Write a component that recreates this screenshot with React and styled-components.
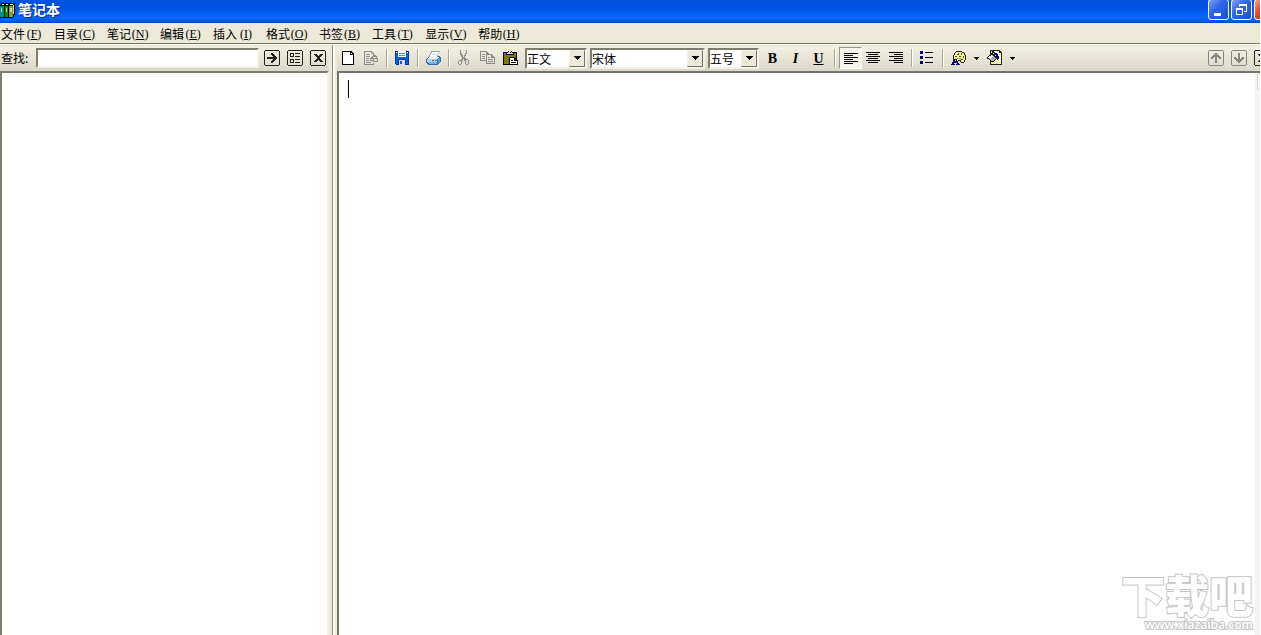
import styled, { createGlobalStyle, css } from "styled-components";

const menus = [
  ["文件", "F"],
  ["目录", "C"],
  ["笔记", "N"],
  ["编辑", "E"],
  ["插入", "I"],
  ["格式", "O"],
  ["书签", "B"],
  ["工具", "T"],
  ["显示", "V"],
  ["帮助", "H"],
];

export default function App() {
  return (
    <Window>
      <GlobalStyle />
      <TitleBar>
        <BooksIcon />
        <Title>笔记本</Title>
        <WindowButton aria-label="最小化">
          <Glyph>
            <path d="M3 11h7v3H3z" fill="#fff" />
          </Glyph>
        </WindowButton>
        <WindowButton aria-label="还原">
          <Glyph>
            <path d="M5 2h8v8h-3V9h2V4H6v1H5zM2 6h7v7H2zM3 8v4h5V8z" fill="#fff" fillRule="evenodd" />
          </Glyph>
        </WindowButton>
        <WindowButton $close aria-label="关闭">
          <Glyph>
            <path d="M4 4l9 9M13 4l-9 9" stroke="#fff" strokeWidth="2" />
          </Glyph>
        </WindowButton>
      </TitleBar>

      <MenuBar>
        {menus.map(([label, key]) => (
          <MenuItem key={key}>
            {label}
            <Shortcut>
              (<u>{key}</u>)
            </Shortcut>
          </MenuItem>
        ))}
      </MenuBar>

      <Panels>
        <Sidebar>
          <SearchBar>
            <SearchLabel htmlFor="search">查找:</SearchLabel>
            <SearchInput id="search" type="text" />
            <BoxButtons>
              <BoxButton aria-label="查找">
                <BoxGlyph>
                  <path d="M3 7h6V6H8V5H7V3h2v1h1v1h1v1h1v1h1v2h-1v1h-1v1h-1v1H9v1H7v-2h1v-1h1V9H3z" />
                </BoxGlyph>
              </BoxButton>
              <BoxButton aria-label="列表">
                <BoxGlyph>
                  <path d="M3 3h4v4H3zM4 4v2h2V4zM3 9h4v4H3zM4 10v2h2v-2zM8 3h5v1H8zM8 6h5v1H8zM8 9h5v1H8zM8 12h5v1H8z" />
                </BoxGlyph>
              </BoxButton>
              <BoxButton aria-label="关闭查找">
                <CrossGlyph />
              </BoxButton>
            </BoxButtons>
          </SearchBar>
          <Tree />
        </Sidebar>

        <Main>
          <Toolbar>
            <ToolButton aria-label="新建">
              <Glyph>
                <path d="M1 1h9l3 3v11H1z" fill="#000" />
                <path d="M2 2h7v3h3v9H2z" fill="#fff" />
                <path d="M10 3h1v1h-1z" fill="#fff" />
              </Glyph>
            </ToolButton>
            <ToolButton aria-label="导出">
              <Glyph>
                <path
                  d="M0 1h8v1h1v1h1v2H9V4H8V3H7V2H1v12h8v-1h1v2H0zM2 4h4v1H2zM2 6h4v1H2zM2 8h3v1H2zM2 10h3v1H2zM2 12h5v1H2z"
                  fill="#8c8c8c"
                />
                <path
                  d="M6 8h1V7h1V6h1V5h3v1h1v2h1v4H9v-1H6zM9 7v1h3V7zM7 9v1h2V9zM10 9v2h3V9z"
                  fill="#8c8c8c"
                  fillRule="evenodd"
                />
              </Glyph>
            </ToolButton>
            <Separator />
            <ToolButton aria-label="保存">
              <Glyph>
                <path d="M0 1h14v14H1v-1H0z" fill="#003a9c" />
                <path d="M1 2h12v12H1z" fill="#0860d0" />
                <path d="M3 1h8v6H3z" fill="#fff" />
                <path d="M4 3h6v1H4zM4 5h6v1H4z" fill="#5a88c8" />
                <path d="M3 9h8v6H3z" fill="#003a9c" />
                <path d="M4 10h6v5H4z" fill="#d8dcf0" />
                <path d="M5 11h2v3H5z" fill="#0860d0" />
                <path d="M1 2h1v1H1zM12 2h1v1h-1z" fill="#fff" />
              </Glyph>
            </ToolButton>
            <Separator />
            <ToolButton aria-label="打印">
              <Glyph>
                <path d="M0 9h1V8h1V7h2V6h10v1h1v5h-1v1h-1v1h-1v1H2v-1H1v-1H0z" fill="#2e6fb8" />
                <path d="M1 9h10v4H2v-1H1z" fill="#a9d4f7" />
                <path d="M3 7h10v1h-1v1H2V8h1z" fill="#e4f4ff" />
                <path d="M12 9h1V8h1v4h-1v1h-1z" fill="#5ea2e2" />
                <path d="M3 12h8v2H3z" fill="#6cb2ee" />
                <path d="M5 1h9v1h-1v2h-1v3H3V5h1V3h1z" fill="#8aa4c4" />
                <path d="M6 2h7v1h-1v2h-1v2H4V5h1V3h1z" fill="#fff" />
                <path d="M6 4h5v1H6z" fill="#c5cfdc" />
                <path d="M6 10h2v1H6z" fill="#e02020" />
                <path d="M9 10h2v1H9z" fill="#18b030" />
              </Glyph>
            </ToolButton>
            <Separator />
            <ToolButton aria-label="剪切">
              <Glyph>
                <path
                  d="M3 0h1v3h1v2h1v2h1V5h1V3h1V0h1v4H9v2H8v2h1v1h2v1h1v4h-1v1H9v-1H8v-3H7V9H6v2H5v3H4v1H2v-1H1v-3h1v-1h2V9h1V7H4V5H3zM2 11v3h2v-3zM9 10v4h2v-4z"
                  fill="#8c8c8c"
                  fillRule="evenodd"
                />
              </Glyph>
            </ToolButton>
            <ToolButton aria-label="复制">
              <Glyph>
                <path
                  d="M0 1h7v1h1v1h1v1H6V2H1v8h5v1H0zM2 4h3v1H2zM2 6h3v1H2zM2 8h3v1H2zM6 4h6v1h1v1h1v1h1v7H6zM7 5v8h7V8h-3V5zM8 7h2v1H8zM8 9h5v1H8zM8 11h5v1H8z"
                  fill="#8c8c8c"
                  fillRule="evenodd"
                />
              </Glyph>
            </ToolButton>
            <ToolButton aria-label="粘贴">
              <Glyph>
                <path d="M0 2h14v13H0z" fill="#000" />
                <path d="M1 3h12v11H1z" fill="#7b7b00" />
                <path d="M3 3h8v2H3zM5 1h4v2H5z" fill="#000" />
                <path d="M4 3h1V2h1V1h2v1h1v1h1v1H4z" fill="#f5f000" />
                <path d="M7 2h1v1H7z" fill="#000" />
                <path d="M6 7h6v1h1v1h1v1h1v5H6z" fill="#000" />
                <path d="M7 8h4v3h3v3H7z" fill="#fff" />
                <path d="M8 10h2v1H8zM8 12h5v1H8z" fill="#000" />
              </Glyph>
            </ToolButton>
            <Combo $width={62} label="样式" value="正文" />
            <Combo $width={115} label="字体" value="宋体" />
            <Combo $width={51} label="字号" value="五号" />
            <FontButtons>
              <ToolButton aria-label="加粗">
                <Letter as="b">B</Letter>
              </ToolButton>
              <ToolButton aria-label="斜体">
                <Letter as="i">I</Letter>
              </ToolButton>
              <ToolButton aria-label="下划线">
                <Letter as="u">U</Letter>
              </ToolButton>
            </FontButtons>
            <Separator />
            <ToolButton $pressed aria-label="左对齐" aria-pressed="true">
              <Glyph>
                <path d="M1 3h14v1H1zM1 5h9v1H1zM1 7h14v1H1zM1 9h9v1H1zM1 11h14v1H1zM1 13h9v1H1z" />
              </Glyph>
            </ToolButton>
            <ToolButton aria-label="居中">
              <Glyph>
                <path d="M0 2h14v1H0zM2 4h10v1H2zM0 6h14v1H0zM2 8h10v1H2zM0 10h14v1H0zM2 12h10v1H2z" />
              </Glyph>
            </ToolButton>
            <ToolButton aria-label="右对齐">
              <Glyph>
                <path d="M0 2h14v1H0zM5 4h9v1H5zM0 6h14v1H0zM5 8h9v1H5zM0 10h14v1H0zM5 12h9v1H5z" />
              </Glyph>
            </ToolButton>
            <Separator />
            <ToolButton aria-label="项目符号">
              <Glyph>
                <path d="M0 1h3v3H0zM0 6h3v3H0zM0 11h3v3H0z" fill="#00007b" />
                <path d="M5 2h8v1H5zM5 7h8v1H5zM5 12h8v1H5z" />
              </Glyph>
            </ToolButton>
            <Separator />
            <ToolButton aria-label="文字颜色">
              <Glyph>
                <path d="M5 1h6v1h2v1h1v2h1v5h-1v2h-1v1h-3v-1H9v-1H7v1H3v-1H2V5h1V3h1V2h1z" fill="#222" />
                <path d="M5 2h6v1h2v2h1v5h-1v2h-3v-2H7v1H3V5h1V3h1z" fill="#f5ef8e" />
                <path
                  d="M6 3h2v2H6zM10 3h1v2h-1zM4 6h2v1H4zM12 6h1v2h-1zM8 6h2v1H8zM10 9h2v1h-2z"
                  fill="#55552a"
                />
                <path d="M6 3h1v1H6zM5 5h1v1H5zM11 5h1v1h-1z" fill="#fff" />
                <path d="M6 8h1v1H6z" fill="#c02020" />
                <path d="M8 8h2v1H8z" fill="#20a0a0" />
                <path
                  d="M3 9h3v2h1v2h1v1h1v1H5v-1h1v-1H3v1h1v1H0v-1h1v-2h1v-2h1zM4 10v2h1v-2z"
                  fill="#00007b"
                  fillRule="evenodd"
                />
              </Glyph>
            </ToolButton>
            <DropArrow aria-label="选择文字颜色">
              <ArrowGlyph />
            </DropArrow>
            <ToolButton aria-label="背景颜色">
              <Glyph>
                <path d="M3 0h10v1h1v1h1v13H3z" fill="#222" />
                <path d="M4 1h8v2h2v11H4z" fill="#fff" />
                <path
                  d="M4 1h2v1H4zM10 1h1v1h-1zM12 4h2v1h-2zM12 7h1v1h-1zM13 9h1v1h-1zM11 10h1v1h-1zM12 12h2v1h-2zM9 11h1v1H9zM9 13h2v1H9zM7 12h1v1H7zM5 12h1v1H5zM4 13h1v1H4z"
                  fill="#f3e500"
                />
                <path d="M4 3h2v1h1v1h1v1h1v1h1v2H9v1H8v1H7v1H4v-1H3v-1H2V9H0V7h1V6h1V5h1V4h1z" fill="#222" />
                <path d="M4 5h2v1h1v1h1v1h1v1H8v1H7v1H4v-1H3V9H2V8H1V7h1V6h2z" fill="#a8a8a8" />
                <path d="M4 5h1v1h1v1H5v1H4v1H3V8H1V7h1V6h2z" fill="#f4f4f4" />
                <path d="M5 1h2v1h1v3H7V3H5z" fill="#222" />
                <path d="M8 3h2v1h1v2h1v3h-1v1h-1V7H9V5H8z" fill="#00007b" />
              </Glyph>
            </ToolButton>
            <DropArrow aria-label="选择背景颜色">
              <ArrowGlyph />
            </DropArrow>
            <NavButtons>
              <BoxButton disabled aria-label="上一条">
                <BoxGlyph>
                  <path d="M7 3h2v1h1v1h1v1h1v1h1v2h-2V8h-1V7H9v6H7V7H6v1H5v1H3V7h1V6h1V5h1V4h1z" />
                </BoxGlyph>
              </BoxButton>
              <BoxButton disabled aria-label="下一条">
                <BoxGlyph>
                  <path d="M7 13h2v-1h1v-1h1v-1h1V9h1V7h-2v1h-1v1H9V3H7v6H6V8H5V7H3v2h1v1h1v1h1v1h1z" />
                </BoxGlyph>
              </BoxButton>
              <BoxButton aria-label="关闭笔记">
                <CrossGlyph />
              </BoxButton>
            </NavButtons>
          </Toolbar>
          <Editor>
            <NoteText aria-label="笔记内容" spellCheck={false} />
            <ScrollTrack>
              <ScrollButton aria-label="向上滚动" disabled />
            </ScrollTrack>
            <Caret />
            <Watermark>
              <Brand>下载吧</Brand>
              <Site>www.xiazaiba.com</Site>
            </Watermark>
          </Editor>
        </Main>
      </Panels>
    </Window>
  );
}

function Combo({ label, value, $width }) {
  return (
    <ComboFrame $width={$width}>
      <ComboSelect aria-label={label} defaultValue={value}>
        <option>{value}</option>
      </ComboSelect>
      <ComboArrow>
        <ArrowGlyph />
      </ComboArrow>
    </ComboFrame>
  );
}

function Glyph({ children }) {
  return (
    <svg width="16" height="16" viewBox="0 0 16 16" shapeRendering="crispEdges" aria-hidden="true">
      {children}
    </svg>
  );
}

function BoxGlyph({ children }) {
  return (
    <svg
      width="16"
      height="16"
      viewBox="0 0 16 16"
      shapeRendering="crispEdges"
      fill="currentColor"
      fillRule="evenodd"
      aria-hidden="true"
    >
      <path d="M1 0h14v1h1v14h-1v1H1v-1H0V1h1zM1 1v14h14V1z" />
      {children}
    </svg>
  );
}

function CrossGlyph() {
  return (
    <BoxGlyph>
      <path d="M4 4h3v1h1v1h1V5h1V4h3v1h-1v1h-1v1h-1v2h1v1h1v1h1v1h-3v-1H9v-1H8v1H7v1H4v-1h1v-1h1V9h1V7H6V6H5V5H4z" />
    </BoxGlyph>
  );
}

function ArrowGlyph() {
  return (
    <svg width="7" height="4" viewBox="0 0 7 4" shapeRendering="crispEdges" aria-hidden="true">
      <path d="M0 0h7v1H6v1H5v1H4v1H3V3H2V2H1V1H0z" />
    </svg>
  );
}

function BooksIcon() {
  return (
    <svg width="16" height="16" viewBox="0 0 16 16" shapeRendering="crispEdges" aria-hidden="true">
      <path d="M1 1h14v12h-1v2h-1v1H0V3h1z" fill="#000" />
      <path d="M2 2h2v1H2zM6 2h2v1H6zM10 2h3v1h-3z" fill="#fff" />
      <path d="M0 4h4v11H0z" fill="#009090" />
      <path d="M5 4h3v11H5z" fill="#009800" />
      <path d="M9 4h4v11H9z" fill="#8f9a18" />
      <path d="M1 6h1v4H1zM6 6h1v4H6zM10 6h2v4h-2z" fill="#d8d890" />
      <path d="M13 3h1v9h-1z" fill="#c8c8c8" />
    </svg>
  );
}

const GlobalStyle = createGlobalStyle`
  * {
    box-sizing: border-box;
  }

  body {
    margin: 0;
    background: #ffffff;
    font-family: "Liberation Sans", "Noto Sans CJK SC", sans-serif;
    font-size: 12px;
    color: #000000;
  }

  button {
    margin: 0;
    padding: 0;
    border: none;
    background: none;
    font: inherit;
    color: inherit;
  }

  svg {
    display: block;
    flex-shrink: 0;
  }
`;

const sunken = css`
  border: 2px solid;
  border-color: #7f7d6e #f4f2e8 #f4f2e8 #7f7d6e;
`;

const Window = styled.div`
  height: 100vh;
  margin-right: 1px;
  display: flex;
  flex-direction: column;
  overflow: hidden;
  background: #ece9d8;
`;

const TitleBar = styled.header`
  height: 23px;
  flex-shrink: 0;
  display: flex;
  align-items: center;
  gap: 2px;
  margin-right: -15px;
  padding-bottom: 4px;
  background: linear-gradient(
    #0055dd 0,
    #0050e0 6px,
    #0054e6 9px,
    #0062fc 15px,
    #0066ff 19px,
    #0058ee 21px,
    #0040c0 23px
  );
`;

const Title = styled.h1`
  flex: 1;
  margin: 0;
  padding-bottom: 2px;
  font-family: "Noto Sans CJK SC", sans-serif;
  font-size: 14px;
  line-height: 18px;
  font-weight: 700;
  color: #ffffff;
  text-shadow: 1px 1px #0a2a80;
`;

const WindowButton = styled.button`
  width: 21px;
  height: 21px;
  display: flex;
  align-items: center;
  justify-content: center;
  border: 1px solid #ffffff;
  border-radius: 3px;
  background: ${({ $close }) =>
    $close
      ? "linear-gradient(135deg, #f0a088, #e0492a 40%, #c03010)"
      : "linear-gradient(135deg, #7ea4f6, #2f66e8 40%, #1a4fd0)"};
`;

const MenuBar = styled.nav`
  height: 21px;
  flex-shrink: 0;
  display: flex;
  gap: 11px;
  padding-left: 1px;
  border-bottom: 1px solid #77756a;
`;

const MenuItem = styled.button`
  display: flex;
  align-items: center;
  padding-top: 1px;
  font-family: "Noto Sans CJK SC", sans-serif;
  font-size: 12px;
  line-height: 20px;
`;

const Shortcut = styled.span`
  width: 18px;
  text-align: center;
  font-family: "Liberation Serif", serif;
  font-size: 12px;
`;

const Panels = styled.div`
  flex: 1;
  min-height: 0;
  display: flex;
  border-top: 1px solid #ffffff;
`;

const Sidebar = styled.aside`
  width: 333px;
  flex-shrink: 0;
  display: flex;
  flex-direction: column;
  padding: 2px 3px 0 0;
  border-right: 1px solid #8d8a7a;
`;

const SearchBar = styled.form`
  height: 24px;
  flex-shrink: 0;
  display: flex;
  align-items: center;
  padding: 0 3px 2px 1px;
  background: linear-gradient(#f2efe3, #dcd8c8);
`;

const SearchLabel = styled.label`
  width: 35px;
  font-family: "Noto Sans CJK SC", sans-serif;
  line-height: 20px;
`;

const SearchInput = styled.input`
  ${sunken}
  flex: 1;
  min-width: 0;
  height: 20px;
  padding: 0 2px;
  background: #ffffff;
  outline: none;
`;

const BoxButtons = styled.div`
  display: flex;
  gap: 7px;
  margin-left: 5px;
`;

const BoxButton = styled.button`
  color: #222222;

  &:disabled {
    color: #868686;
  }
`;

const Tree = styled.div`
  ${sunken}
  border-bottom: none;
  flex: 1;
  background: #ffffff;
`;

const Main = styled.main`
  flex: 1;
  min-width: 0;
  display: flex;
  flex-direction: column;
  padding: 2px 0 0 2px;
  border-left: 2px solid #ffffff;
`;

const Toolbar = styled.div`
  height: 24px;
  flex-shrink: 0;
  display: flex;
  align-items: center;
  padding-bottom: 2px;
  background: linear-gradient(#f2efe3, #dcd8c8);
`;

const ToolButton = styled.button`
  width: 23px;
  height: 22px;
  flex-shrink: 0;
  display: flex;
  align-items: center;
  justify-content: center;

  ${({ $pressed }) =>
    $pressed &&
    css`
      border: 1px solid;
      border-color: #9a9786 #ffffff #ffffff #9a9786;
      background: #f5f3ec;
    `}
`;

const FontButtons = styled.div`
  display: flex;
  margin: 0 1px 0 2px;
`;

const Separator = styled.span`
  width: 2px;
  height: 18px;
  flex-shrink: 0;
  margin: 0 3px;
  background: #ffffff;
  border-left: 1px solid #aca899;
`;

const ComboFrame = styled.span`
  ${sunken}
  position: relative;
  width: ${({ $width }) => $width}px;
  height: 21px;
  flex-shrink: 0;
  display: flex;
  margin-left: 3px;
  background: #ffffff;
`;

const ComboSelect = styled.select`
  width: 100%;
  padding: 0;
  border: none;
  appearance: none;
  background: transparent;
  font-family: "Noto Sans CJK SC", sans-serif;
  font-size: 12px;
  line-height: 17px;
  color: #000000;
  outline: none;
`;

const ComboArrow = styled.span`
  position: absolute;
  inset: 0 0 0 auto;
  width: 16px;
  display: flex;
  align-items: center;
  justify-content: center;
  border: 1px solid;
  border-color: #f4f2e8 #77756a #77756a #f4f2e8;
  background: #ece9d8;
  pointer-events: none;
`;

const Letter = styled.span`
  padding-top: 1px;
  font-family: "Liberation Serif", serif;
  font-size: 14px;
  line-height: 16px;
  font-weight: 700;
`;

const DropArrow = styled.button`
  width: 13px;
  height: 22px;
  display: flex;
  align-items: center;
  justify-content: center;

  svg {
    width: 5px;
    height: 3px;
  }
`;

const NavButtons = styled.div`
  display: flex;
  gap: 7px;
  margin: 0 -10px 0 auto;
`;

const Editor = styled.section`
  position: relative;
  flex: 1;
  min-height: 0;
  display: flex;
  border: solid #77756a;
  border-width: 2px 0 0 2px;
  background: #ffffff;
`;

const NoteText = styled.textarea`
  flex: 1;
  padding: 8px 9px;
  border: none;
  outline: none;
  resize: none;
  background: transparent;
  font-family: "Noto Sans CJK SC", sans-serif;
  font-size: 14px;
  line-height: 18px;
`;

const ScrollTrack = styled.div`
  width: 17px;
  margin-right: -12px;
  background: #f4f3ee;
`;

const ScrollButton = styled.button`
  width: 17px;
  height: 17px;
  margin-left: 2px;
  border: 1px solid #dcdad0;
  border-radius: 2px;
  background: #f8f7f3;
`;

const Caret = styled.span`
  position: absolute;
  top: 7px;
  left: 9px;
  width: 1px;
  height: 18px;
  background: #000000;
`;

const Watermark = styled.div`
  position: absolute;
  right: 7px;
  bottom: 4px;
  text-align: right;
  color: #ffffff;
  -webkit-text-stroke: 2px #c4c4c4;
  paint-order: stroke fill;
  pointer-events: none;
`;

const Brand = styled.div`
  font-family: "Noto Sans CJK SC", sans-serif;
  font-size: 44px;
  line-height: 50px;
  font-weight: 900;
`;

const Site = styled.div`
  font-family: "Open Sans", sans-serif;
  font-size: 12px;
  line-height: 12px;
  font-weight: 600;
`;
